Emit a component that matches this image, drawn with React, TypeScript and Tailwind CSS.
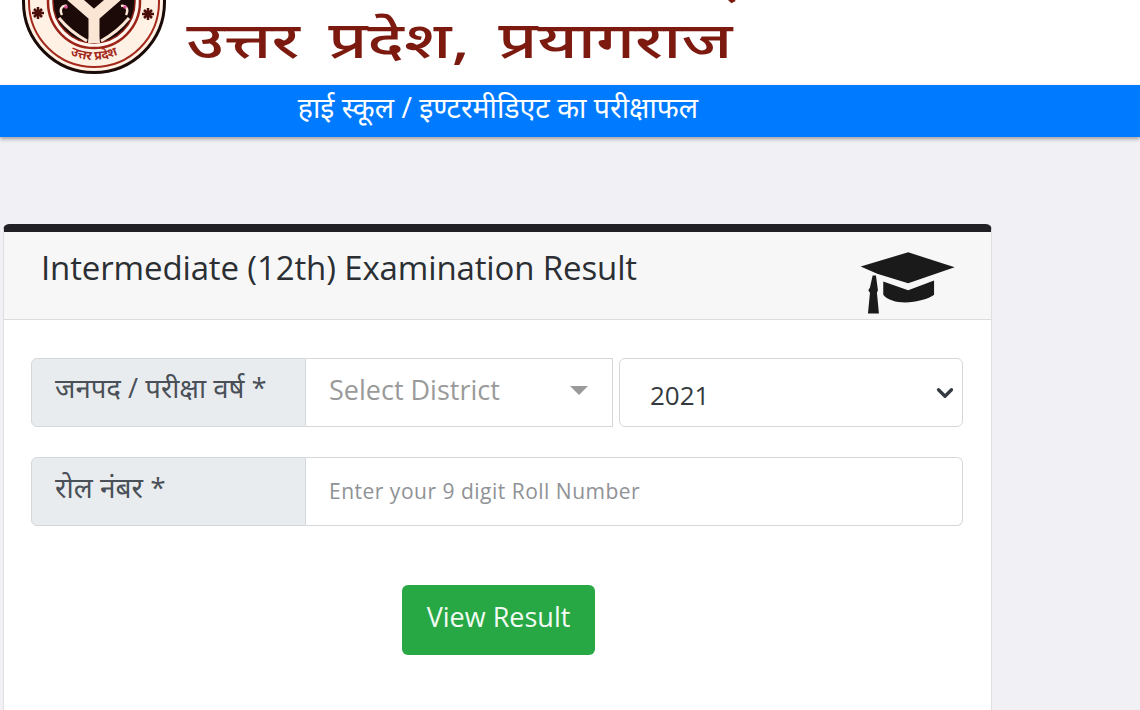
import { ChevronDown } from "lucide-react";

const sans = "font-['Open_Sans','Noto_Sans',sans-serif]";

function Emblem() {
  return (
    <svg viewBox="0 0 144 144" className="h-[144px] w-[144px] shrink-0">
      <circle cx="72" cy="72" r="70.5" fill="#fff1e4" stroke="#1b0b08" strokeWidth="3" />
      <circle cx="72" cy="72" r="65" fill="none" stroke="#a3291c" strokeWidth="2" />
      <circle cx="72" cy="72" r="46" fill="#fff8f0" stroke="#9c2418" strokeWidth="2.5" />
      <circle cx="72" cy="72" r="41" fill="#1c0a08" stroke="#8c1f14" strokeWidth="1.5" />
      {/* trident and fish */}
      <path d="M72 112V86L49 66M72 86L95 66" fill="none" stroke="#fbe6d6" strokeWidth="11" />
      <path d="M66 113h12l-2-12h-8z" fill="#fbe6d6" />
      <path d="M37 88C45 98 56 106 65 111M107 88C99 98 88 106 79 111" fill="none" stroke="#fbe6d6" strokeWidth="3" />
      <path d="M40 85c-3-6 0-10 5-9M104 85c3-6 0-10-5-9" fill="none" stroke="#fbe6d6" strokeWidth="2.5" />
      <circle cx="44" cy="77" r="1.8" fill="#e0529a" />
      <circle cx="103" cy="77" r="1.8" fill="#e0529a" />
      {/* side stars */}
      <path d="M10 83h12M16 77v12M12 79l8 8M20 79l-8 8" stroke="#4a0f08" strokeWidth="2.5" />
      <path d="M120 84h12M126 78v12M122 80l8 8M130 80l-8 8" stroke="#4a0f08" strokeWidth="2.5" />
      <path id="emblem-arc" d="M36 118Q72 142 108 118" fill="none" />
      <text className="font-['Noto_Sans',sans-serif]" fontSize="12.5" fontWeight="700" fill="#a3291c">
        <textPath href="#emblem-arc" startOffset="50%" textAnchor="middle">
          उत्तर प्रदेश
        </textPath>
      </text>
    </svg>
  );
}

function GradCap() {
  return (
    <svg viewBox="60 112 286 188" className="h-[63px] w-[95px] shrink-0" fill="#1a1a1a">
      <path d="M62 155 205 112 345 157 205 205 112 177Z" />
      <path d="M130 200 205 226 283 197V240C255 262 160 278 130 240Z" />
      <path d="M98 182h10l6 44-3 8 6 62H84l6-62-5-8 5-8z" />
    </svg>
  );
}

export default function App() {
  return (
    <div className={`h-[710px] w-[1140px] overflow-hidden bg-[#f1f0f4] ${sans}`}>
      <header className="flex h-[85px] items-start overflow-hidden bg-white pl-[22px]">
        <div className="-mt-[70px]">
          <Emblem />
        </div>
        {/* the first line of the title is cut off by the top of the window */}
        <h1 className="-mt-[66px] ml-[17px] flex w-[407px] origin-top-left scale-x-[1.35] flex-col items-end whitespace-nowrap font-['Noto_Sans',serif] text-[50px] leading-[70px] font-medium [word-spacing:8px] text-[#7c1a10]">
          <span>माध्यमिक शिक्षा परिषद्</span>
          <span>उत्तर प्रदेश, प्रयागराज</span>
        </h1>
      </header>

      <div className="flex h-[52px] items-center justify-center bg-[#007bff] pr-[144px] pb-[7px] shadow-[0_2px_4px_rgba(0,0,0,0.35)]">
        <p className="text-[28.5px] leading-none text-white">हाई स्कूल / इण्टरमीडिएट का परीक्षाफल</p>
      </div>

      <section className="ml-[3px] mt-[87px] w-[989px] overflow-hidden rounded-t-[6px] border-x border-t-[8px] border-[#dfdfe2] border-t-[#212125] bg-white pb-[80px]">
        <div className="flex h-[88px] items-start justify-between border-b border-[#dcdcdf] bg-[#f7f7f8] pr-[36px] pl-[37px]">
          <h2 className="pt-[13px] text-[33px] leading-[46px] font-normal tracking-[-0.13px] text-[#2b2f33]">
            Intermediate (12th) Examination Result
          </h2>
          <div className="pt-[20px]">
            <GradCap />
          </div>
        </div>

        <div className="flex flex-col px-[27px] pt-[38px]">
          <div className="flex h-[69px] w-[932px]">
            <div className="flex w-[275px] items-start rounded-l-[6px] border border-[#d5d8db] bg-[#e9ecef] pt-[11px] pl-[23px] text-[27.5px] leading-[36px] text-[#495057]">
              जनपद / परीक्षा वर्ष *
            </div>
            <div className="flex w-[307px] items-center justify-between border border-l-0 border-[#d5d8db] bg-white pr-[24px] pl-[23px] text-[27px] text-[#9a9a9a]">
              <span className="-mt-[5px]">Select District</span>
              <span className="-mt-[4px] h-0 w-0 border-x-[9px] border-t-[9px] border-x-transparent border-t-[#9a9a9a]" />
            </div>
            <div className="ml-[6px] flex w-[344px] items-center justify-between rounded-[6px] border border-[#d5d8db] bg-white pr-[4px] pl-[30px] text-[26px] text-[#343a40]">
              <span className="mt-[5px]">2021</span>
              <ChevronDown className="h-[26px] w-[26px] text-[#343a40]" strokeWidth={3} />
            </div>
          </div>

          <div className="mt-[30px] flex h-[69px] w-[932px]">
            <div className="flex w-[275px] items-start rounded-l-[6px] border border-[#d5d8db] bg-[#e9ecef] pt-[11px] pl-[23px] text-[28px] leading-[36px] text-[#495057]">
              रोल नंबर *
            </div>
            <input
              readOnly
              placeholder="Enter your 9 digit Roll Number"
              className="min-w-0 flex-1 rounded-r-[6px] border border-l-0 border-[#d5d8db] bg-white pl-[23px] text-[21px] tracking-[0.5px] outline-none placeholder:text-[#8f9296]"
            />
          </div>

          <button className="mt-[59px] ml-[371px] h-[70px] w-[193px] rounded-[6px] bg-[#28a745] pb-[6px] text-[27px] text-[#f1fbf3]">
            View Result
          </button>
        </div>
      </section>
    </div>
  );
}
